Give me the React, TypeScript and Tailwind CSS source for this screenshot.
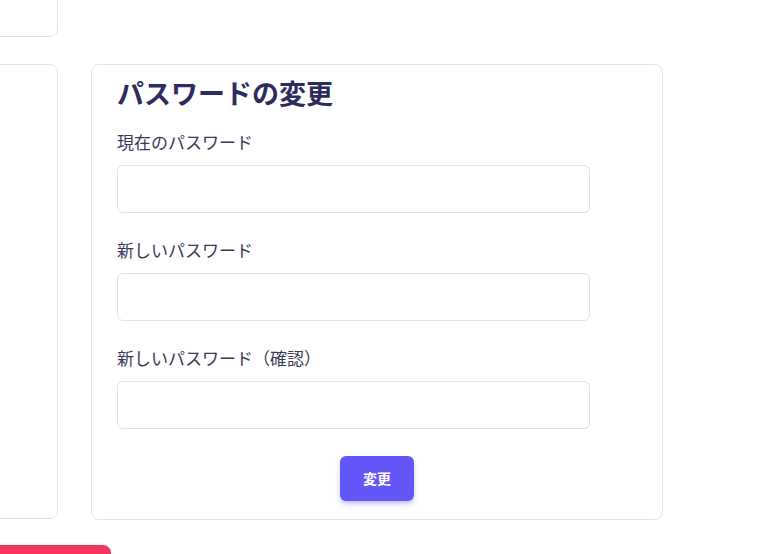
const fields = ["現在のパスワード", "新しいパスワード", "新しいパスワード（確認）"];

export default function App() {
  return (
    <div
      className="w-[768px] h-[554px] overflow-hidden bg-white"
      style={{ fontFamily: '"Noto Sans", "Noto Sans CJK JP", sans-serif' }}
    >
      <div className="flex items-start gap-[33px] -ml-[242px]">
        {/* Left column */}
        <div className="flex flex-col w-[300px] shrink-0 -mt-[63px]">
          <div className="h-[100px] border border-[#e4e2f0] rounded-lg" />
          <div className="h-[455px] mt-[27px] border border-[#e4e2f0] rounded-lg" />
          <div className="h-[44px] mt-[26px] w-[353px] rounded-lg bg-[#f5365c]" />
        </div>

        {/* Password card */}
        <div className="mt-[64px] w-[572px] h-[456px] shrink-0 border border-[#e4e2f0] rounded-lg px-[25px] pt-[11px]">
          <h2 className="text-[27px] leading-[35px] font-bold text-[#2f2b5c]">
            パスワードの変更
          </h2>
          <div className="flex flex-col mt-[20px] gap-[26px]">
            {fields.map((f) => (
              <div key={f} className="flex flex-col">
                <label className="text-[17px] leading-[24px] text-[#3b3956]">{f}</label>
                <input
                  type="password"
                  className="mt-[10px] w-[473px] h-[48px] border border-[#e2e1ee] rounded-md outline-none"
                />
              </div>
            ))}
          </div>
          <div className="flex justify-center mt-[27px]">
            <button className="w-[74px] h-[45px] rounded-md bg-[#6457f9] text-white text-[14px] font-bold shadow-md shadow-[#6457f9]/30">
              変更
            </button>
          </div>
        </div>
      </div>
    </div>
  );
}
